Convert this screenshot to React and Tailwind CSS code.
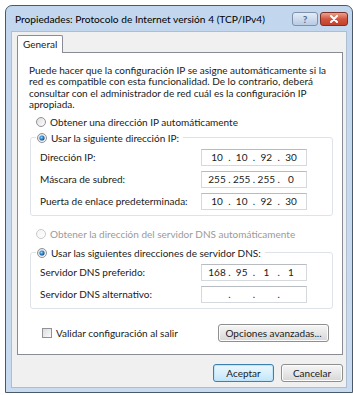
import React from 'react';

const font = "font-['Lato','Liberation_Sans',sans-serif]";

function Radio({ checked, disabled }) {
  return (
    <svg width="10" height="10" viewBox="0 0 10 10" className="shrink-0">
      <defs>
        <linearGradient id={`rg${disabled ? 'd' : 'n'}`} x1="0" y1="0" x2="1" y2="1">
          <stop offset="0" stopColor={disabled ? '#f4f4f4' : '#dcdcdc'} />
          <stop offset="1" stopColor="#ffffff" />
        </linearGradient>
        <radialGradient id="rdot" cx="0.4" cy="0.4" r="0.6">
          <stop offset="0" stopColor="#8fd3ff" />
          <stop offset="0.6" stopColor="#2a7fc8" />
          <stop offset="1" stopColor="#1a4f86" />
        </radialGradient>
      </defs>
      <circle cx="5" cy="5" r="4.5" fill={`url(#rg${disabled ? 'd' : 'n'})`} stroke={disabled ? '#c9c9c9' : '#8f9297'} strokeWidth="1" />
      {checked && <circle cx="5" cy="5" r="2.6" fill="url(#rdot)" />}
    </svg>
  );
}

function IpBox({ parts }) {
  return (
    <div className="w-[106px] h-[17px] bg-white border border-[#d5d8dc] border-t-[#b7bcc2] flex items-center justify-between px-[6px] text-[#1a1a1a]">
      {parts.map((p, i) => (
        <React.Fragment key={i}>
          {i > 0 && <span className="px-[1px]">.</span>}
          <span className="w-[18px] text-center">{p}</span>
        </React.Fragment>
      ))}
    </div>
  );
}

function Row({ label, parts }) {
  return (
    <div className="flex items-center justify-between h-[22px] pl-[9px] pr-[25px]">
      <span>{label}</span>
      <IpBox parts={parts} />
    </div>
  );
}

function Group({ legend, children }) {
  return (
    <div className="relative ml-[12px] mr-[9px] border border-[#dde3e8] rounded-[3px] pt-[8px] pb-[3px]">
      <div className="absolute -top-[8px] left-[5px] flex items-center gap-[4px] bg-white pl-[1px] pr-[4px] h-[16px]">
        <Radio checked />
        <span>{legend}</span>
      </div>
      {children}
    </div>
  );
}

function WinButton({ children, primary, className = '' }) {
  return (
    <button
      className={`h-[18px] rounded-[3px] border text-[10px] text-[#1a1a1a] ${
        primary
          ? 'border-[#3c7fb1] bg-gradient-to-b from-[#eaf6fd] via-[#d9f0fc] to-[#bee6fd] shadow-[inset_0_0_0_1px_#bfe4f8]'
          : 'border-[#8e8f8f] bg-gradient-to-b from-[#f6f6f6] via-[#e7e7e7] to-[#d6d6d6] shadow-[inset_0_0_0_1px_#fcfcfc]'
      } ${className}`}
    >
      {children}
    </button>
  );
}

export default function App() {
  return (
    <div className={`w-[353px] h-[395px] bg-white overflow-hidden ${font} text-[10px] text-[#1a1a1a]`}>
      <div className="ml-[5px] mt-[5px] w-[348px] h-[388px] border border-[#4b5a6b] rounded-t-[7px] bg-gradient-to-b from-[#c2d7ee] to-[#c9dbef] flex flex-col pl-[5px] pr-[5px] pb-[4px]">
        {/* title bar */}
        <div className="h-[25px] flex items-start justify-between">
          <span className="pl-[4px] pt-[8px] text-[10.2px] text-black leading-none">
            Propiedades: Protocolo de Internet versión 4 (TCP/IPv4)
          </span>
          <div className="flex gap-[2px] mt-[6px] -mr-[1px]">
            <div className="w-[26px] h-[14px] rounded-[3px] border border-[#7d91ab] bg-gradient-to-b from-[#e3ecf6] to-[#b7cbe3] flex items-center justify-center text-[10px] font-bold text-[#52698a] leading-none">
              ?
            </div>
            <div className="w-[28px] h-[14px] rounded-[3px] border border-[#7a3225] bg-gradient-to-b from-[#e9a18f] via-[#d2553f] to-[#c4402b] flex items-center justify-center">
              <svg width="10" height="8" viewBox="0 0 10 8">
                <path d="M2 1 L8 7 M8 1 L2 7" stroke="#fff" strokeWidth="2" strokeLinecap="round" />
              </svg>
            </div>
          </div>
        </div>

        {/* client area */}
        <div className="flex-1 bg-[#f0f0f0] border border-[#aebdd0] flex flex-col pl-[5px] pr-[3px] pt-[3px]">
          {/* tab */}
          <div className="flex">
            <div className="w-[46px] h-[18px] bg-white border border-[#898c95] border-b-0 rounded-t-[2px] flex items-center pl-[5px] relative z-10 -mb-[1px]">
              General
            </div>
          </div>
          {/* panel */}
          <div className="h-[303px] bg-white border border-[#898c95] flex flex-col">
            <p className="px-[11px] pt-[12px] leading-[11.3px] whitespace-nowrap">
              Puede hacer que la configuración IP se asigne automáticamente si la
              <br />
              red es compatible con esta funcionalidad. De lo contrario, deberá
              <br />
              consultar con el administrador de red cuál es la configuración IP
              <br />
              apropiada.
            </p>
            <div className="flex items-center gap-[4px] pl-[18px] mt-[5px] h-[14px]">
              <Radio />
              <span>Obtener una dirección IP automáticamente</span>
            </div>
            <div className="mt-[8px]">
              <Group legend="Usar la siguiente dirección IP:">
                <Row label="Dirección IP:" parts={['10', '10', '92', '30']} />
                <Row label="Máscara de subred:" parts={['255', '255', '255', '0']} />
                <Row label="Puerta de enlace predeterminada:" parts={['10', '10', '92', '30']} />
              </Group>
            </div>
            <div className="flex items-center gap-[4px] pl-[18px] mt-[11px] h-[14px] text-[#9a9a9a]">
              <Radio disabled />
              <span>Obtener la dirección del servidor DNS automáticamente</span>
            </div>
            <div className="mt-[11px]">
              <Group legend="Usar las siguientes direcciones de servidor DNS:">
                <Row label="Servidor DNS preferido:" parts={['168', '95', '1', '1']} />
                <Row label="Servidor DNS alternativo:" parts={['', '', '', '']} />
              </Group>
            </div>
            <div className="flex items-center justify-between mt-[15px] pl-[24px] pr-[13px]">
              <div className="flex items-center gap-[4px]">
                <span className="w-[10px] h-[10px] border border-[#8f9297] bg-gradient-to-br from-[#dcdcdc] to-[#fafafa]" />
                <span>Validar configuración al salir</span>
              </div>
              <WinButton className="w-[111px] h-[17px]">Opciones avanzadas...</WinButton>
            </div>
          </div>
          {/* buttons */}
          <div className="flex justify-end gap-[7px] mt-[9px]">
            <WinButton primary className="w-[61px]">Aceptar</WinButton>
            <WinButton className="w-[62px]">Cancelar</WinButton>
          </div>
        </div>
      </div>
    </div>
  );
}
